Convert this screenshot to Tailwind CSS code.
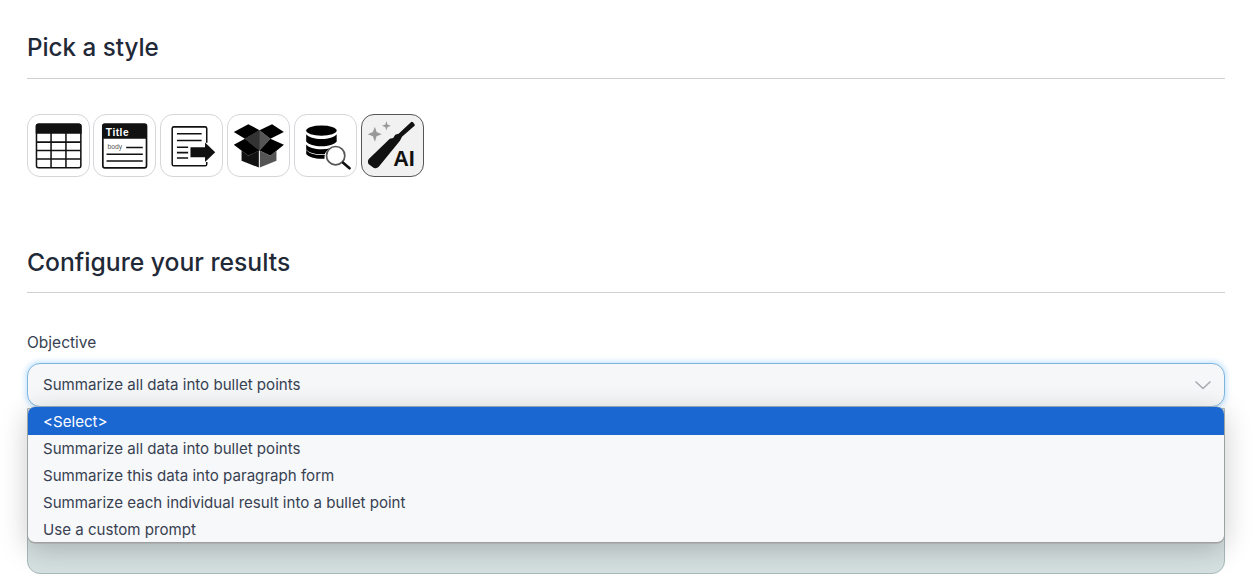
<!DOCTYPE html>
<html><head><meta charset="utf-8"><title>Pick a style</title>
<script src="https://cdn.jsdelivr.net/npm/@tailwindcss/browser@4"></script></head>
<body class="bg-white overflow-hidden font-['Inter','Noto_Sans',sans-serif] text-[#212529]">
<div class="relative w-[1257px] h-[586px] overflow-hidden px-[27px] pt-[30px]">
  <h2 class="text-[24.200px] leading-[36px] font-medium text-[#1f2937]">Pick a style</h2>
  <div class="w-[1198px] border-t border-[#cfd0d2] mt-[12px]"></div>
  <div class="flex mt-[35px]">
    <div class="w-[63px] h-[63px] rounded-[13px] border border-[#d5d6da] bg-white">
      <svg class="-m-px" width="63" height="63" viewBox="22 27 186 186" fill="none" stroke="#111" stroke-width="4.500"><rect x="50" y="57" width="131" height="129" rx="6"/><path d="M50 63a6 6 0 0 1 6-6h119a6 6 0 0 1 6 6v20H50z" fill="#111"/><path d="M93 83v103M137 83v103M50 110h131M50 135h131M50 160h131"/></svg>
    </div>
    <div class="ml-[3px] w-[63px] h-[63px] rounded-[13px] border border-[#d5d6da] bg-white">
      <svg class="-m-px" width="63" height="63" viewBox="220 27 186 186" fill="none"><rect x="249" y="57" width="129" height="129" rx="6" stroke="#111" stroke-width="5"/><path d="M249 63a6 6 0 0 1 6-6h117a6 6 0 0 1 6 6v37H249z" fill="#111"/><text x="258" y="92" font-family="Liberation Sans" font-weight="700" font-size="30" letter-spacing="1.500" fill="#fff">Title</text><text x="263" y="129" font-family="Liberation Sans" font-size="20" fill="#555">body</text><path d="M318 126h49M260 146h107M260 166h107" stroke="#111" stroke-width="4.500"/></svg>
    </div>
    <div class="ml-1 w-[63px] h-[63px] rounded-[13px] border border-[#d5d6da] bg-white">
      <svg class="-m-px" width="63" height="63" viewBox="422 27 186 186" fill="none"><path d="M560 112V70a5 5 0 0 0-5-5h-92a5 5 0 0 0-5 5v105a5 5 0 0 0 5 5h92a5 5 0 0 0 5-5v-6" stroke="#111" stroke-width="4.500"/><path d="M472 85h73M472 105h73M472 125h33M472 141h33M472 157h33" stroke="#111" stroke-width="4.500"/><path d="M512 125h43v-14l30 29-30 29v-14h-43z" fill="#111"/></svg>
    </div>
    <div class="ml-1 w-[63px] h-[63px] rounded-[13px] border border-[#d5d6da] bg-white">
      <svg class="-m-px" width="63" height="63" viewBox="22 27 186 186"><path d="M75 100l43-25 32 25-32 35z" fill="#555"/><path d="M75 100l43-25v60z" fill="#333"/><path d="M42 80l43-23 33 18-43 25zM118 75l37-18 35 23-40 20zM42 118l33-18 43 35-33 15zM190 118l-40-18-32 35 32 15z" fill="#000"/><path d="M65 135l20 15 31-15v50l-51-20z" fill="#111"/><path d="M168 135l-18 15-31-15v50l49-20z" fill="#555"/></svg>
    </div>
    <div class="ml-1 w-[63px] h-[63px] rounded-[13px] border border-[#d5d6da] bg-white">
      <svg class="-m-px" width="63" height="63" viewBox="222 27 186 186" fill="none"><ellipse cx="303" cy="76" rx="45" ry="15" fill="#000"/><path d="M258 87c6 9 25 14 45 14s39-5 45-14v21c-6 9-25 14-45 14s-39-5-45-14z" fill="#000"/><path d="M258 117c6 9 25 14 45 14 10 0 19-1 27-3-8 4-14 10-17 17-3 0-7 1-10 1-20 0-39-5-45-14z" fill="#000"/><path d="M258 133v12c6 9 25 14 45 14h9c0-4 0-8 1-12-3 0-7 1-10 1-20 0-39-6-45-15z" fill="#000"/><circle cx="345" cy="150" r="27" fill="#fff" stroke="#555" stroke-width="5"/><path d="M367 171l19 16" stroke="#111" stroke-width="8" stroke-linecap="round"/></svg>
    </div>
    <div class="ml-1 w-[63px] h-[63px] rounded-[13px] border-[1.500px] border-[#55555a] bg-[#f1f1f2]">
      <svg class="-m-[1.500px]" width="63" height="63" viewBox="425 27 186 186"><path d="M574 50c4 0 10 6 10 11l-38 33-6 12-62 76c-4 4-12 7-16 4l-14-11c-4-4-3-11 0-15l62-60 10-2 6-10 10-3z" fill="#111"/><path d="M466 65l5 15 15 7-15 6-5 16-6-16-15-6 15-7z" fill="#999"/><path d="M500 48l3 10 10 4-10 4-3 10-3-10-10-4 10-4z" fill="#999"/><text x="520" y="182" font-family="Liberation Sans" font-weight="700" font-size="64" fill="#111">AI</text></svg>
    </div>
  </div>
  <h2 class="text-[24.700px] leading-[36px] font-medium text-[#1f2937] mt-[67px]">Configure your results</h2>
  <div class="w-[1198px] border-t border-[#cfd0d2] mt-[12px]"></div>
  <label class="block text-[15.500px] leading-[22px] text-[#374151] mt-[39px]">Objective</label>
  <div class="w-[1198px] h-[44px] mt-[9px] rounded-[13px] border border-[#7fb6e0] bg-[#f6f7f9] shadow-[0_0_5px_2px_rgba(140,200,250,0.45)] flex items-center justify-between pl-[15px] pr-[12px] text-[15.100px] text-[#374151]">
    <span>Summarize all data into bullet points</span>
    <svg width="18" height="10" viewBox="0 0 18 10" fill="none"><path d="M1.500 1.500 9 8.500l7.500-7" stroke="#a9abb0" stroke-width="1.600"/></svg>
  </div>
  <div class="w-[1198px] h-[166px] mt-[1px] rounded-b-[13px] border border-[#a8b8bb] bg-[#d5e0e1]"></div>
  <div class="absolute left-[28px] top-[407px] w-[1196px] h-[136px] rounded-[7px] bg-[#f7f8fa] border-b border-[#a0a0a0] overflow-hidden shadow-[0_0_0_0.5px_#a0a0a0,0_6px_28px_rgba(0,0,0,0.22)] text-[15.100px] text-[#374151]">
    <div class="h-[28px] bg-[#1a67d2] text-white pl-[15px] pt-[2px] flex items-center">&lt;Select&gt;</div>
    <div class="h-[27px] pl-[15px] pt-[2px] flex items-center">Summarize all data into bullet points</div>
    <div class="h-[27px] pl-[15px] pt-[2px] flex items-center">Summarize this data into paragraph form</div>
    <div class="h-[27px] pl-[15px] pt-[2px] flex items-center">Summarize each individual result into a bullet point</div>
    <div class="h-[27px] pl-[15px] pt-[2px] flex items-center">Use a custom prompt</div>
  </div>
</div>
</body></html>
